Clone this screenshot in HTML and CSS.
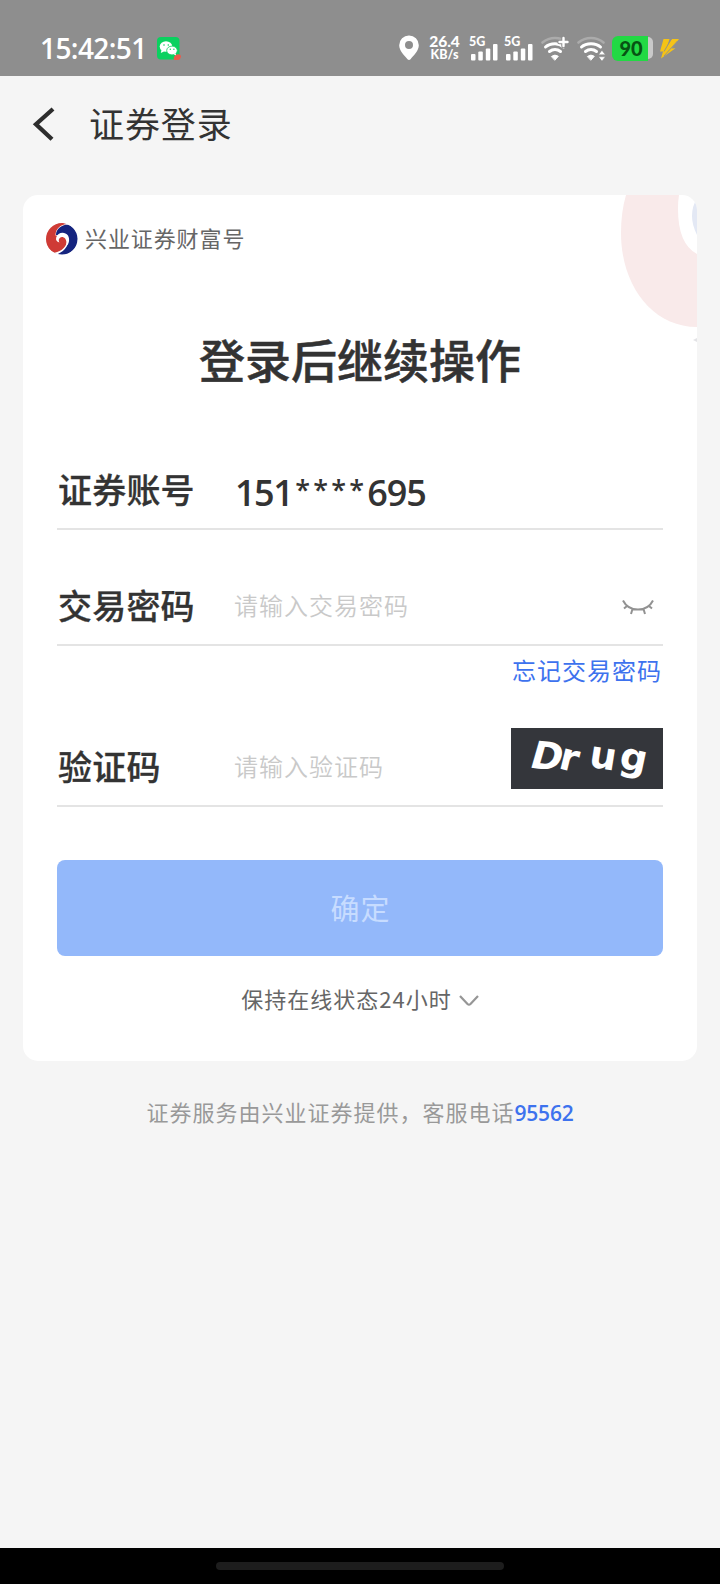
FILE: index.html
```html
<!DOCTYPE html>
<html lang="zh-CN">
<head>
<meta charset="utf-8">
<title>证券登录</title>
<link rel="stylesheet" href="styles.css">
</head>
<body>
<div class="screen">
  <header class="status">
    <span class="clock">15:42:51</span>
    <svg class="wechat" width="26" height="25" viewBox="0 0 26 25">
      <rect x="1" y="1" width="22.500" height="22.500" rx="4" fill="#0ad15f"/>
      <ellipse cx="10" cy="10.500" rx="6.300" ry="5.300" fill="#fff"/>
      <path d="M5.500 14l-.7 3 3.200-1.600z" fill="#fff"/>
      <ellipse cx="16" cy="14.500" rx="5.300" ry="4.400" fill="#fff" stroke="#0ad15f" stroke-width=".8"/>
      <path d="M17.500 18l2.700 1.900-.4-2.700z" fill="#fff"/>
      <circle cx="8" cy="9" r=".8" fill="#0ad15f"/><circle cx="12.300" cy="9" r=".8" fill="#0ad15f"/>
      <circle cx="14.300" cy="13.300" r=".7" fill="#0ad15f"/><circle cx="17.900" cy="13.300" r=".7" fill="#0ad15f"/>
      <path d="M18 24a4.200 4.200 0 0 1 7-4.300c0 2.500-1.300 4.300-3.200 4.300z" fill="#e95b4b"/>
    </svg>
    <div class="status-right">
      <svg class="pin" width="20" height="26" viewBox="0 0 20 26"><path fill="#fff" fill-rule="evenodd" d="M10 .5A9.700 9.700 0 0 0 .2 10.200C.2 16 5.500 20.500 8.500 24.200q1.500 1.500 3 0C14.500 20.500 19.800 16 19.800 10.200A9.700 9.700 0 0 0 10 .5zM10 6a4 4 0 1 1 0 8 4 4 0 0 1 0-8z"/></svg>
      <div class="speed"><b class="rate">26.4</b><b class="unit">KB/s</b></div>
      <div class="signal"><b>5G</b>
        <svg width="28" height="18" viewBox="0 0 28 18" fill="#fff"><rect x="1" y="11" width="4.500" height="6.500" rx="1"/><rect x="8.300" y="8.500" width="4.500" height="9" rx="1"/><rect x="15.800" y="5.500" width="4.500" height="12" rx="1"/><rect x="23" y="1" width="4.500" height="16.500" rx="1"/></svg>
      </div>
      <div class="signal second"><b>5G</b>
        <svg width="28" height="18" viewBox="0 0 28 18" fill="#fff"><rect x="1" y="11" width="4.500" height="6.500" rx="1"/><rect x="8.300" y="8.500" width="4.500" height="9" rx="1"/><rect x="15.800" y="5.500" width="4.500" height="12" rx="1"/><rect x="23" y="1" width="4.500" height="16.500" rx="1"/></svg>
      </div>
      <svg class="wifi" width="28" height="26" viewBox="0 0 28 26" fill="none" stroke-width="3" stroke-linecap="round">
        <path d="M1.500 6.500Q7 2 14 2q3.500 0 6 1" stroke="#ababab" stroke-width="2.600"/>
        <path d="M4.500 11Q8 7.700 14 7.700q5 0 8.500 3.300M8.500 15.500q2.500-2 5.500-2t5.500 2" stroke="#fff"/>
        <path d="M10.700 20.300q3.300-2.500 6.600 0L14 24z" fill="#fff" stroke="#fff" stroke-width="1"/>
        <path d="M22.500 2v8M18.500 6h8" stroke="#8e8e8e" stroke-width="4.500"/>
        <path d="M22.500 2v8M18.500 6h8" stroke="#fff" stroke-width="2.400"/>
      </svg>
      <svg class="wifi" width="29" height="26" viewBox="0 0 29 26" fill="none" stroke-width="3" stroke-linecap="round">
        <path d="M1.500 6.500Q7 2 14 2t12.500 4.500" stroke="#ababab" stroke-width="2.600"/>
        <path d="M4.500 11Q8 7.700 14 7.700t9.500 3.300M8.500 15.500q2.500-2 5.500-2t5.500 2" stroke="#fff"/>
        <path d="M10.700 20.300q3.300-2.500 6.600 0L14 24z" fill="#fff" stroke="#fff" stroke-width="1"/>
        <path d="M25 14.500l3.300 4.200h-6.600zM25 25l3.300-4.200h-6.600z" fill="#fff" stroke="#8e8e8e" stroke-width=".5"/>
      </svg>
      <div class="battery"><span class="level">90</span><span class="rest"></span></div>
      <svg class="bolt" width="21" height="21" viewBox="0 0 21 21"><path d="M4.500 1h6L8.500 7.500 13 1h7l-7.500 9.500 4-.3L2 20.500l2-7H1z" fill="#f5c316"/><path d="M12.300 1L5 13.500M18.500 3L5 18" stroke="#8e8e8e" stroke-width=".9"/></svg>
    </div>
  </header>

  <nav class="nav">
    <svg class="back" width="24" height="34" viewBox="0 0 24 34"><path d="M22 2L5 17.200 21 32.200" fill="none" stroke="#2d2d2d" stroke-width="4.300"/></svg>
    <h1>证券登录</h1>
  </nav>

  <main class="card">
    <svg class="watermark" width="77" height="155" viewBox="0 0 77 155">
      <path fill="#f9eaea" d="M6 0Q1 17 1 38C1 90 32 132 77 132V59Q58 49 58 14 58 6 59 0z"/>
      <path fill="#e3e8f4" d="M77 3q-10 17 0 37z"/>
      <path fill="#e3e3e6" d="M73 145l4-2v4z"/>
    </svg>
    <div class="brand">
      <svg width="32" height="32" viewBox="0 0 32 32">
        <circle cx="16" cy="16" r="15.500" fill="#15247f"/>
        <path d="M22 .5L0 0v32l9 0C17 29.500 23 24 22.300 15L10 12C10 6 15 2 22 1.500z" fill="#fff"/>
        <path d="M20.500 1A15.500 15.500 0 0 0 8.500 29.700C16 28.500 21.800 23 21.500 15L9.500 12.500C9.500 6 14 2 20.500 1z" fill="#cf3b35"/>
        <path d="M10.200 14.500C11.500 9.500 18.500 8 22 12.500 24.500 17 22.500 22 19.500 24 22 18 19 13.500 16 14 12.800 14.500 12 17.500 13.500 19.500 10.500 18.800 9.500 16.800 10.200 14.500z" fill="#fff"/>
      </svg>
      <span>兴业证券财富号</span>
    </div>
    <h2>登录后继续操作</h2>
    <section class="field account">
      <label>证券账号</label>
      <div class="number"><span class="head">151</span><span class="stars">****</span><span class="tail">695</span></div>
    </section>
    <section class="field password">
      <label>交易密码</label>
      <span class="placeholder">请输入交易密码</span>
      <svg class="eye" width="34" height="18" viewBox="0 0 34 18" fill="none" stroke="#929292" stroke-width="2"><path d="M2 2.500q4.500 9 15 9t15-9M6 8l-3 2.500M11.500 11L10 16M22.500 11l1.500 5M28 8l3 2.500"/></svg>
    </section>
    <a class="forgot">忘记交易密码</a>
    <section class="field code">
      <label>验证码</label>
      <span class="placeholder">请输入验证码</span>
      <svg class="captcha" width="152" height="61" viewBox="0 0 152 61">
        <rect width="152" height="61" fill="#34363b"/>
        <g class="captcha-text">
          <text transform="translate(17 39.500) rotate(6) skewX(-10)">D</text>
          <text transform="translate(46.500 40) rotate(14)">r</text>
          <text transform="translate(77 38.500) rotate(9)">u</text>
          <text transform="translate(107 39.500) rotate(12)">g</text>
        </g>
      </svg>
    </section>
    <button class="submit">确定</button>
    <div class="keep"><span>保持在线状态24小时</span><svg width="22" height="14" viewBox="0 0 22 14"><path d="M2 2l7.500 8q1.500 1.400 3 0L20 2" fill="none" stroke="#969696" stroke-width="2.200"/></svg></div>
  </main>
  <p class="service">证券服务由兴业证券提供，客服电话<b>95562</b></p>
  <footer class="home"><span></span></footer>
</div>
</body>
</html>
```
FILE: styles.css
```css
* { box-sizing: border-box; margin: 0; padding: 0; }
body { background: #f5f5f5; font-family: "Noto Sans CJK SC", sans-serif; color: #333; }
svg { display: block; flex: none; }
.screen { width: 720px; height: 1584px; display: flex; flex-direction: column; overflow: hidden; white-space: nowrap; }
.status { height: 76px; flex: none; background: #8e8e8e; color: #fff; display: flex; align-items: center; padding: 20px 0 0 40px; font-family: Lato, sans-serif; }
.clock { width: 116px; font-family: "Open Sans", sans-serif; font-size: 28px; font-weight: 600; letter-spacing: -0.6px; line-height: 36px; }
.status-right { display: flex; align-items: center; margin-left: 217px; }
.speed { width: 31px; margin-left: 10px; display: flex; flex-direction: column; align-items: center; }
.rate { font-size: 15.500px; line-height: 14px; font-weight: 900; }
.unit { font-size: 12.500px; line-height: 14px; font-weight: 900; }
.signal { width: 30px; height: 26px; margin-left: 9px; display: grid; }
.signal b, .signal svg { grid-area: 1 / 1; }
.signal b { font-size: 12.500px; line-height: 14px; font-weight: 900; }
.signal svg { align-self: end; margin-left: 1px; }
.signal.second { margin-left: 5px; }
.wifi { margin: 2px 0 0 7px; }
.wifi + .wifi { margin-left: 8px; }
.battery { width: 41px; height: 25px; margin-left: 6px; display: flex; align-items: center; }
.level { width: 36px; height: 25px; border-radius: 6px 0 0 6px; background: #22d944; color: #075313; font-size: 20px; line-height: 25px; font-weight: 900; text-align: center; padding-left: 2px; }
.rest { width: 5px; height: 22px; border-radius: 0 5px 5px 0; background: #c9c9c9; }
.bolt { margin-left: 6px; }
.nav { height: 119px; flex: none; display: flex; padding: 21px 0 0 31px; }
.back { margin-top: 10px; }
.nav h1 { margin-left: 34px; font-size: 35px; line-height: 51px; font-weight: 400; letter-spacing: 0.9px; }
.card { width: 674px; height: 866px; flex: none; margin-left: 23px; padding: 0 34px; background: #fff; border-radius: 15px; position: relative; overflow: hidden; display: flex; flex-direction: column; }
.watermark { position: absolute; right: 0; top: 0; }
.brand { height: 87px; margin-left: -11px; display: flex; align-items: center; gap: 7px; font-size: 22px; letter-spacing: 0.9px; color: #666; }
.brand svg { border-radius: 50%; }
.brand span { padding-bottom: 4px; }
h2 { height: 158px; text-align: center; font-size: 46px; line-height: 152px; font-weight: 500; -webkit-text-stroke: 0.5px #333; }
.field { display: grid; grid-template-columns: 177px 1fr auto; align-items: center; border-bottom: 2px solid #e4e4e4; }
.field label { font-size: 34px; line-height: 50px; font-weight: 500; letter-spacing: 0.2px; padding: 0 0 3px 1px; -webkit-text-stroke: 0.3px #333; }
.account { height: 90px; padding-top: 12px; }
.number { font-family: "Open Sans", sans-serif; font-weight: 550; font-size: 36px; line-height: 50px; display: flex; padding: 5px 0 0 1px; }
.head { letter-spacing: -1.500px; }
.stars { font-size: 27px; line-height: 43px; letter-spacing: 3.200px; padding-left: 3px; }
.tail { letter-spacing: -1.100px; }
.password { height: 116px; padding-top: 39px; }
.placeholder { font-size: 24px; letter-spacing: 1px; color: #c9c9c9; font-weight: 350; padding-bottom: 4px; }
.code .placeholder { padding-bottom: 3px; }
.eye { margin-right: 8px; }
.forgot { align-self: flex-end; height: 51px; font-size: 24px; line-height: 48px; letter-spacing: 1px; padding-right: 1px; color: #3d72ee; }
.code { height: 110px; padding-top: 31px; }
.code label { padding-bottom: 1px; }
.captcha { margin: -8px 0 8px; }
.captcha-text { fill: #fff; font-family: "DejaVu Sans", sans-serif; font-size: 38px; font-weight: 700; }
.submit { height: 96px; flex: none; margin-top: 53px; border: 0; border-radius: 8px; background: #93b8fa; color: #c7dcff; font: 400 29px/92px "Noto Sans CJK SC", sans-serif; letter-spacing: 1px; padding: 0 0 3px 1px; }
.keep { display: flex; justify-content: center; align-items: center; height: 88px; gap: 6px; font-size: 22px; letter-spacing: 1px; color: #666; padding-left: 1px; }
.keep span { padding-bottom: 4px; }
.keep svg { margin-top: 2px; }
.service { height: 487px; flex: none; padding-top: 34px; text-align: center; font-size: 22px; line-height: 33px; letter-spacing: 1px; color: #999; }
.service b { font-family: "Open Sans", sans-serif; font-size: 21px; font-weight: 650; letter-spacing: -0.2px; color: #3d72ee; }
.home { flex: 1; background: #000; display: flex; justify-content: center; padding-top: 14px; }
.home span { width: 288px; height: 8px; border-radius: 4px; background: #1d1d1d; }
```
